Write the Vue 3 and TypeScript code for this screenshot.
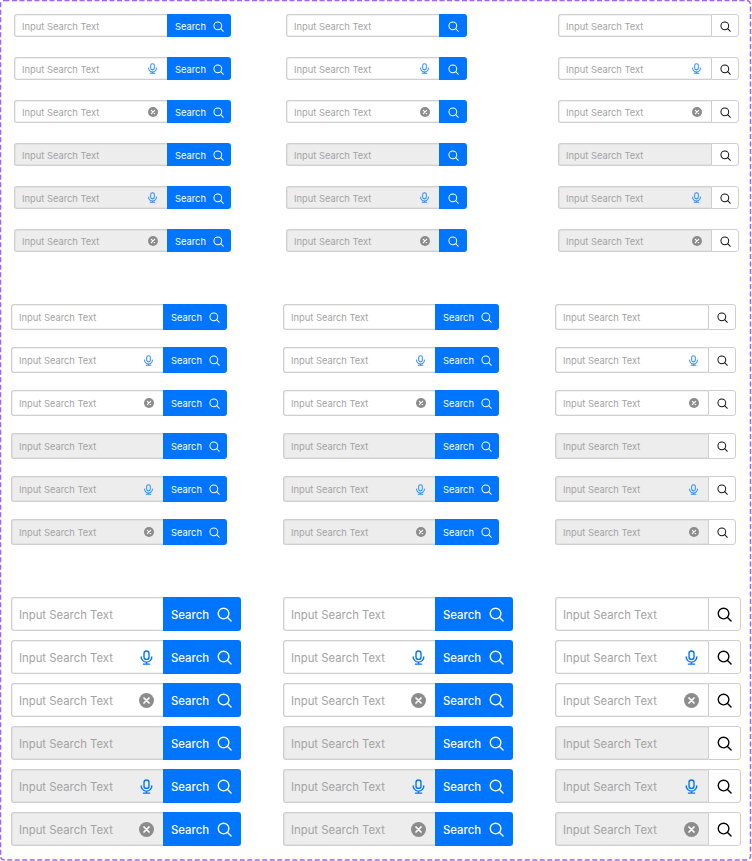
<script setup lang="ts">
type Trail = 'none' | 'mic' | 'clear'

const groups = [
  { size: 'small', columns: ['label', 'icon', 'outline'] },
  { size: 'medium', columns: ['label', 'label', 'outline'] },
  { size: 'large', columns: ['label', 'label', 'outline'] }
]
const rows: { filled: boolean; trail: Trail }[] = [
  { filled: false, trail: 'none' },
  { filled: false, trail: 'mic' },
  { filled: false, trail: 'clear' },
  { filled: true, trail: 'none' },
  { filled: true, trail: 'mic' },
  { filled: true, trail: 'clear' }
]
</script>

<template>
  <div class="frame">
    <svg class="dashes" width="752" height="861">
      <rect x="0.5" y="0.5" width="750" height="859.5" rx="4" fill="none" stroke="#a55eff" stroke-width="1.5" stroke-dasharray="5 2.5" />
    </svg>
    <section v-for="group in groups" :key="group.size" class="group" :class="group.size">
      <div v-for="(col, c) in group.columns" :key="c" class="column">
        <div v-for="(row, i) in rows" :key="i" class="search">
          <div class="field" :class="{ filled: row.filled }">
            <span class="placeholder">Input Search Text</span>
            <svg v-if="row.trail === 'mic'" class="trail mic" viewBox="0 0 24 24" fill="none" stroke="currentColor" stroke-width="2.2" stroke-linecap="round">
              <rect x="8" y="1.5" width="8" height="13.5" rx="4" />
              <path d="M3.5 11a8.5 8.5 0 0 0 17 0M12 19.5v3M7 22.5h10" />
            </svg>
            <svg v-else-if="row.trail === 'clear'" class="trail clear" viewBox="0 0 24 24">
              <circle cx="12" cy="12" r="12" fill="#8c8c8c" />
              <path d="M8 8l8 8M16 8l-8 8" stroke="#fff" stroke-width="2.8" stroke-linecap="round" />
            </svg>
          </div>
          <button class="action" :class="col">
            <span v-if="col === 'label'" class="action-text">Search</span>
            <svg class="glass" viewBox="0 0 24 24" fill="none" stroke="currentColor" stroke-width="2.2" stroke-linecap="round">
              <circle cx="10.5" cy="10.5" r="8.5" />
              <path d="M16.8 16.8L22.5 22.5" />
            </svg>
          </button>
        </div>
      </div>
    </section>
  </div>
</template>

<style>
html, body {
  background: #fff;
}
</style>

<style scoped>
.frame {
  position: relative;
  width: 752px;
  height: 861px;
  padding-top: 14px;
  box-sizing: border-box;
  overflow: hidden;
  font-family: Inter, "Liberation Sans", sans-serif;
}
.dashes {
  position: absolute;
  left: 0;
  top: 0;
}
.group {
  display: grid;
}
.column {
  display: flex;
  flex-direction: column;
}
.search {
  display: flex;
}
.field {
  flex: 1;
  display: flex;
  align-items: center;
  justify-content: space-between;
  box-sizing: border-box;
  border: 1px solid #cfcfcf;
  border-right: 0;
  border-radius: 3px 0 0 3px;
  background: #fff;
  box-shadow: inset 1px 1px 0 #f0f0f0, inset 0 -1px 0 #f0f0f0;
  padding: 0 9px 0 7px;
  min-width: 0;
}
.field.filled {
  background: #ededed;
  box-shadow: inset 1px 1px 0 #e2e2e2, inset 0 -1px 0 #e2e2e2;
}
.placeholder {
  padding-top: 1px;
  font-size: 9.33px;
  color: #a3a3a3;
  white-space: nowrap;
}
.trail {
  flex: none;
}
.mic {
  color: #2a8cff;
}
.action {
  flex: none;
  display: flex;
  align-items: center;
  justify-content: center;
  box-sizing: border-box;
  margin: 0;
  padding: 0;
  border: 0;
  border-radius: 0 3px 3px 0;
  font-family: inherit;
  background: #0075ff;
  color: #fff;
  gap: 7px;
}
.action.label {
  justify-content: flex-start;
  padding-left: 8px;
}
.action.icon,
.action.outline {
  width: 28px;
}
.action.outline {
  background: #fff;
  color: #111;
  border: 1px solid #cfcfcf;
}
.action-text {
  padding-top: 1px;
  font-size: 9.33px;
}
.glass {
  flex: none;
  margin-top: 1px;
}

/* small */
.small {
  grid-template-columns: 217px 217px 181px;
  column-gap: 55px;
  padding-left: 14px;
}
.small .column {
  gap: 20px;
}
.small .column:nth-child(2) {
  width: 181px;
}
.small .search {
  height: 23px;
}
.small .action.label {
  width: 64px;
}
.small .trail {
  width: 10px;
  height: 10px;
}
.small .mic {
  width: 11px;
  height: 11px;
}
.small .glass {
  width: 11px;
  height: 11px;
}

/* medium */
.medium {
  grid-template-columns: 216px 216px 181px;
  column-gap: 56px;
  padding-left: 11px;
  margin-top: 52px;
}
.medium .column {
  gap: 17px;
}
.medium .search {
  height: 26px;
}
.medium .action.label {
  width: 64px;
}
.medium .trail {
  width: 10px;
  height: 10px;
}
.medium .mic {
  width: 11px;
  height: 11px;
}
.medium .glass {
  width: 11px;
  height: 11px;
}

/* large */
.large {
  grid-template-columns: 230px 230px 186px;
  column-gap: 42px;
  padding-left: 11px;
  margin-top: 52px;
}
.large .column {
  gap: 9px;
}
.large .search {
  height: 34px;
}
.large .action.label {
  width: 78px;
  gap: 8px;
}
.large .action.outline {
  width: 33px;
  color: #000;
}
.large .placeholder {
  padding-top: 2px;
  font-size: 11.33px;
}
.large .action-text {
  padding-top: 2px;
  font-size: 11.33px;
  font-weight: 500;
}
.large .trail {
  width: 15px;
  height: 15px;
}
.large .glass {
  width: 15px;
  height: 15px;
}
.large .mic {
  color: #0075ff;
}
</style>
